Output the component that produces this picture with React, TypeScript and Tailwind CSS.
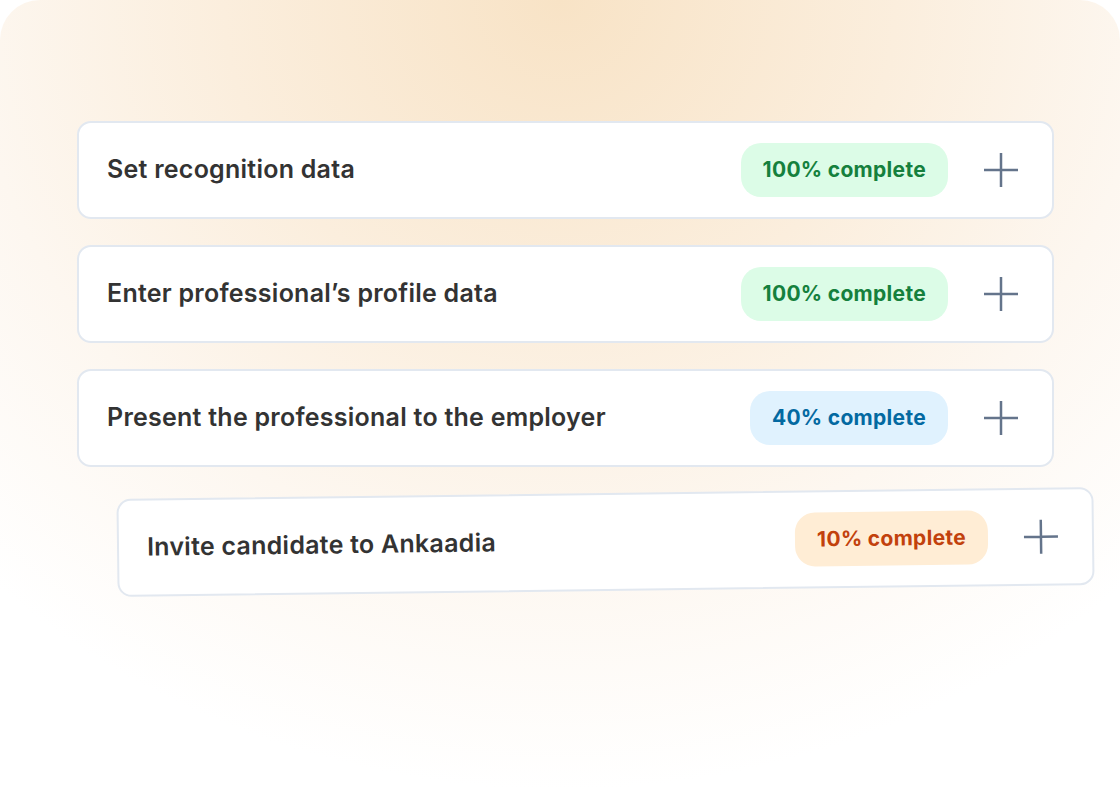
import React from "react";

type Tone = "green" | "blue" | "orange";

type Step = {
  title: string;
  progress: number;
  tone: Tone;
};

const steps: Step[] = [
  { title: "Set recognition data", progress: 100, tone: "green" },
  { title: "Enter professional’s profile data", progress: 100, tone: "green" },
  { title: "Present the professional to the employer", progress: 40, tone: "blue" },
];

const toneClasses: Record<Tone, string> = {
  green: "bg-[#dcfce7] text-[#15803d]",
  blue: "bg-[#e0f2fe] text-[#0369a1]",
  orange: "bg-[#ffedd5] text-[#c2410c]",
};

function PlusIcon() {
  return (
    <svg width="36" height="36" viewBox="0 0 36 36" fill="none" className="shrink-0">
      <path d="M18 1v34M1 18h34" stroke="#64748b" strokeWidth="2.5" />
    </svg>
  );
}

function StepCard({ step, className = "" }: { step: Step; className?: string }) {
  return (
    <div
      className={`flex h-[98px] w-[977px] items-center rounded-[14px] border-2 border-[#e2e8f0] bg-white pl-[28px] pr-[33px] ${className}`}
    >
      <span className="flex-1 text-[25px] font-semibold tracking-[0.25px] text-[#333333]">
        {step.title}
      </span>
      <span
        className={`flex h-[54px] items-center rounded-[20px] px-[22px] text-[21px] font-bold tracking-[0.3px] ${toneClasses[step.tone]}`}
      >
        {step.progress}% complete
      </span>
      <div className="ml-[35px]">
        <PlusIcon />
      </div>
    </div>
  );
}

export default function App() {
  return (
    <div
      className="h-[800px] w-[1120px] overflow-hidden bg-white"
      style={{ fontFamily: "Inter, 'Noto Sans', sans-serif" }}
    >
      <div className="h-full rounded-t-[40px] bg-[radial-gradient(ellipse_840px_790px_at_50%_0%,#f8e3c6_0%,#fbeedd_40%,#fdf7f0_70%,#ffffff_100%)] pl-[77px] pt-[121px]">
        <div className="flex flex-col gap-[26px]">
          {steps.map((step) => (
            <StepCard key={step.title} step={step} />
          ))}
          <StepCard
            step={{ title: "Invite candidate to Ankaadia", progress: 10, tone: "orange" }}
            className="translate-x-[40px] -rotate-[0.7deg]"
          />
        </div>
      </div>
    </div>
  );
}
